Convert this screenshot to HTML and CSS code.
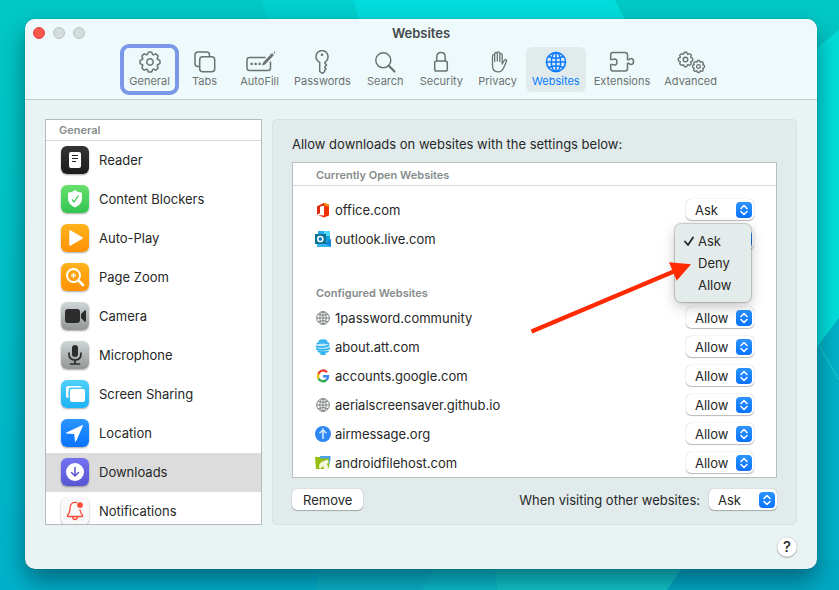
FILE: index.html
```html
<!DOCTYPE html>
<html lang="en">
<head>
<meta charset="utf-8">
<title>Websites</title>
<link rel="stylesheet" href="styles.css">
</head>
<body>
<svg class="defs" aria-hidden="true">
  <defs>
    <path id="tooth" d="M-3.06-7.39C-2.2-7.8-2.3-8.2-2.1-9Q-1.9-10-1-10H1Q1.900-10 2.100-9C2.300-8.200 2.200-7.800 3.060-7.390"/>
    <g id="gear">
      <use href="#tooth"/><use href="#tooth" transform="rotate(45)"/><use href="#tooth" transform="rotate(90)"/><use href="#tooth" transform="rotate(135)"/>
      <use href="#tooth" transform="rotate(180)"/><use href="#tooth" transform="rotate(225)"/><use href="#tooth" transform="rotate(270)"/><use href="#tooth" transform="rotate(315)"/>
      <circle r="3.2"/>
    </g>
    <g id="globe">
      <circle cx="12" cy="12" r="9.500"/><ellipse cx="12" cy="12" rx="4.700" ry="9.500"/>
      <path d="M12 2.500v19M2.500 12h19M4.500 6.500Q12 10 19.500 6.500M4.500 17.500Q12 14 19.500 17.500"/>
    </g>
    <symbol id="chevrons" viewBox="0 0 16 16">
      <rect width="16" height="16" rx="4" fill="url(#blue)"/>
      <path d="M5 6.500L8 3.500L11 6.500M5 9.500L8 12.500L11 9.500" fill="none" stroke="#fff" stroke-width="1.500" stroke-linecap="round" stroke-linejoin="round"/>
    </symbol>
    <linearGradient id="blue" x2="0" y2="1"><stop stop-color="#2b93ff"/><stop offset="1" stop-color="#0a72ff"/></linearGradient>
    <linearGradient id="sea" x2="0" y2="1"><stop stop-color="#00c9c5"/><stop offset=".5" stop-color="#00bfc6"/><stop offset="1" stop-color="#00b2cc"/></linearGradient>
  </defs>
</svg>
<svg class="wallpaper" viewBox="0 0 839 590" preserveAspectRatio="none" aria-hidden="true">
  <rect width="839" height="590" fill="url(#sea)"/>
  <path d="M262 0H353L365 40H273Z" fill="#00d0ce"/>
  <path d="M353 0H615L636 40H365Z" fill="#00dddc"/>
  <path d="M839 30L800 62V370L839 318Z" fill="#00dfda"/>
  <path d="M839 318L800 370V590H839Z" fill="#00b2c8"/>
  <path d="M819 345L839 380" stroke="#12c5d0" stroke-width="1.500"/>
  <path d="M321 560H439L422 590H316Z" fill="#0ab5c8"/>
  <path d="M439 560H494L497 590H422Z" fill="#0cbecb"/>
  <path d="M494 560H688L667 590H497Z" fill="#10c8cb"/>
  <path d="M688 560H839V590H667Z" fill="#00abc6"/>
</svg>

<main class="window">
  <header class="titlebar">
    <div class="lights"><button class="light close" aria-label="Close"></button><button class="light" aria-label="Minimize"></button><button class="light" aria-label="Zoom"></button></div>
    <h1>Websites</h1>
    <nav class="toolbar">
      <button class="tab focused"><svg viewBox="0 0 24 24"><use href="#gear" x="12" y="12"/></svg>General</button>
      <button class="tab"><svg viewBox="0 0 24 24"><path d="M6.500 16.500H5Q2 16.500 2 13.500V5Q2 2 5 2H13.500Q16.500 2 16.500 5V6.500"/><rect x="6.700" y="6.700" width="15" height="15" rx="3"/></svg>Tabs</button>
      <button class="tab"><svg class="wide" viewBox="0 0 30 24"><path d="M20 7.500H4.500Q2 7.500 2 10V18Q2 20.500 4.500 20.500H23Q25.500 20.500 25.500 18V12"/><path d="M18 14.500L20 13.500L28 5L27 4L19 12.500ZM29.500 2.700l.4-.4"/><path class="solid" d="M5.500 12.700h2.300v2.300H5.500zM9.500 12.700h2.300v2.300H9.500zM13.500 12.700h2.300v2.300H13.500z"/></svg>AutoFill</button>
      <button class="tab"><svg viewBox="0 0 24 24"><path d="M9.700 12.300Q6 10.500 6 6.500A6 6 0 0 1 18 6.500Q18 10.500 14.800 12.300V13L16.500 15L14.700 17L16 19L14.700 20.200V21.500L12.500 23.500L9.700 21.500Z"/><circle cx="12" cy="4.700" r="1.300" class="solid"/></svg>Passwords</button>
      <button class="tab"><svg viewBox="0 0 24 24"><circle cx="10.300" cy="10.300" r="7.500"/><path d="M15.800 15.800L21.500 21.500" stroke-width="2.200"/></svg>Search</button>
      <button class="tab"><svg viewBox="0 0 24 24"><rect x="5.700" y="11" width="12.600" height="10" rx="1.800"/><path d="M7.800 11V7Q7.800 2.500 12 2.500Q16.200 2.500 16.200 7V11"/></svg>Security</button>
      <button class="tab"><svg viewBox="0 0 24 24"><path d="M6.500 14V6Q6.500 4.700 7.600 4.700Q8.700 4.700 8.700 6V11.500V4Q8.700 2.500 10 2.500Q11.300 2.500 11.300 4V11V3.200Q11.300 1.800 12.500 1.800Q13.800 1.800 13.800 3.200V11.500V5Q13.800 3.700 15 3.700Q16.200 3.700 16.200 5V14L18.200 10.500Q19.200 9 20.200 9.700Q21 10.200 20.400 11.500L17.800 17.500Q16 21.800 12 21.800Q6.500 21.800 6.500 15.500Z" stroke-width="1.300"/></svg>Privacy</button>
      <button class="tab selected"><svg viewBox="0 0 24 24"><use href="#globe"/></svg>Websites</button>
      <button class="tab"><svg class="wide" viewBox="0 0 30 24"><path d="M6 2.500H18Q20.500 2.500 20.500 5V9.700H22Q22.500 8.500 24 8.500Q26.500 8.500 26.500 11.500Q26.500 14.500 24 14.500Q22.500 14.500 22 13.300H20.500V18.500Q20.500 21 18 21H6Q3.700 21 3.700 18.500V14.500H6Q6.500 15 7.500 15Q10 15 10 12Q10 9 7.500 9Q6.500 9 6 9.500H3.700V5Q3.700 2.500 6 2.500Z"/></svg>Extensions</button>
      <button class="tab"><svg class="wide" viewBox="0 0 30 24"><use href="#gear" transform="translate(9.500 9.500) scale(.72)" stroke-width="1.900"/><use href="#gear" transform="translate(22.500 16.500) scale(.6)" stroke-width="2.200"/></svg>Advanced</button>
    </nav>
  </header>

  <div class="content">
    <aside class="sidebar">
      <h2>General</h2>
      <ul>
        <li><button><svg class="app reader" viewBox="0 0 28 28"><rect x="8" y="6" width="12" height="16" rx="2" fill="#fff"/><path d="M11 9.500h6M11 12.500h6M11 15.500h4" stroke="#222" stroke-width="1.200"/></svg>Reader</button></li>
        <li><button><svg class="app green" viewBox="0 0 28 28"><path d="M14 5Q17 7.500 20.500 7.500Q21 7.500 21 9V14Q21 19 14 22.500Q7 19 7 14V9Q7 7.500 7.500 7.500Q11 7.500 14 5Z" fill="#fff"/><path d="M11 14.500L13 17L17.500 10.500" fill="none" stroke="#3cc953" stroke-width="1.300"/></svg>Content Blockers</button></li>
        <li><button><svg class="app orange" viewBox="0 0 28 28"><path d="M9 7L21 14L9 21Z" fill="#fff" stroke="#fff" stroke-width="1.500" stroke-linejoin="round"/></svg>Auto-Play</button></li>
        <li><button><svg class="app orange" viewBox="0 0 28 28" fill="none" stroke="#fff"><circle cx="12.500" cy="12.500" r="6.500" stroke-width="2"/><path d="M17.500 17.500L22 22" stroke-width="2.600" stroke-linecap="round"/><path d="M10 12.500h5M12.500 10v5" stroke-width="1.300"/></svg>Page Zoom</button></li>
        <li><button><svg class="app gray" viewBox="0 0 28 28" fill="#2c2c2c"><rect x="4" y="7" width="15" height="14" rx="3"/><path d="M20 12L23.500 8.500Q25 8 25 9V19Q25 20 23.500 19.500L20 16Z"/></svg>Camera</button></li>
        <li><button><svg class="app gray" viewBox="0 0 28 28"><rect x="11" y="4" width="6" height="12" rx="3" fill="#2c2c2c"/><path d="M8 12V13Q8 19 14 19Q20 19 20 13V12M14 19v4M9.500 23h9" fill="none" stroke="#2c2c2c" stroke-width="1.700" stroke-linecap="round"/></svg>Microphone</button></li>
        <li><button><svg class="app cyan" viewBox="0 0 28 28"><path d="M7 18Q5 18 5 16V8Q5 6 7 6H19Q20.500 6 21 7.500H10Q7.500 7.500 7.500 10V18Z" fill="#fff"/><rect x="9" y="9" width="15" height="13" rx="2" fill="#fff"/></svg>Screen Sharing</button></li>
        <li><button><svg class="app azure" viewBox="0 0 28 28"><path d="M5.500 14L21.500 6.500L14.500 22.500L13.700 14.500Z" fill="#fff" stroke="#fff" stroke-linejoin="round"/></svg>Location</button></li>
        <li class="current"><button><svg class="app violet" viewBox="0 0 28 28"><circle cx="14" cy="14" r="9" fill="#fff"/><path d="M14 9.500v8M10.500 14.500L14 18L17.500 14.500" fill="none" stroke="#5d5ad8" stroke-width="1.600" stroke-linecap="round" stroke-linejoin="round"/></svg>Downloads</button></li>
        <li><button><svg class="app white" viewBox="0 0 28 28" fill="none" stroke="#fa4a35" stroke-width="1.300" stroke-linecap="round" stroke-linejoin="round"><path d="M15.500 5.500Q9.500 4.500 9 11Q9 16 6.500 18V19.500H21.500V18Q19.500 16.500 19 13M11.500 20Q12 22.500 14 22.500Q16 22.500 16.500 20"/><circle cx="19" cy="8" r="2.200" fill="#fa4a35"/></svg>Notifications</button></li>
      </ul>
    </aside>

    <section class="panel">
      <p class="lead">Allow downloads on websites with the settings below:</p>
      <div class="sites">
        <h2 class="open-heading">Currently Open Websites</h2>
        <ul>
          <li>
            <svg class="favicon" viewBox="0 0 16 16"><path d="M2 4.500L9 1L14 2.500V13.500L9 15.500L3 13L9 13.500V3.500L5 4.500V11L2 12.500Z" fill="#f0320c"/><path d="M9 1L14 2.500V5L9 3.500Z" fill="#ff8a00"/><path d="M2 4.500L9 1V3.500L5 4.500V11L2 12.500Z" fill="#d9290d"/></svg>
            <label for="s1">office.com</label>
            <span class="popup"><select id="s1"><option>Ask</option><option>Deny</option><option>Allow</option></select><svg><use href="#chevrons"/></svg></span>
          </li>
          <li>
            <svg class="favicon" viewBox="0 0 16 16"><path d="M3 0H15V10H3Z" fill="#28a8ea"/><path d="M9 0H15V5H9Z" fill="#50d9ff"/><path d="M9 5H15V10H9Z" fill="#14a0dc"/><path d="M2 8L9 12L16 8V16H2Z" fill="#35b8f1"/><path d="M16 8L9 12L16 16Z" fill="#1486d8"/><rect y="3" width="11" height="10" fill="#0a7396"/><circle cx="5.300" cy="8" r="2.600" fill="#0a73c4" stroke="#fff" stroke-width="1.500"/></svg>
            <label for="s2">outlook.live.com</label>
            <span class="popup"><select id="s2"><option>Ask</option><option>Deny</option><option>Allow</option></select><svg><use href="#chevrons"/></svg>
              <span class="menu" role="menu">
                <button role="menuitemradio" aria-checked="true"><svg viewBox="0 0 10 10"><path d="M1 5.500L4 9L9 1.500"/></svg>Ask</button>
                <button role="menuitemradio" aria-checked="false">Deny</button>
                <button role="menuitemradio" aria-checked="false">Allow</button>
              </span>
              <svg class="arrow" viewBox="0 0 162 74" aria-hidden="true"><path d="M1.500 71.500L145 11" stroke="#ff2a00" stroke-width="4.200"/><path d="M161 4.300L139 2.300L146.700 20.700Z" fill="#ff2a00"/></svg>
            </span>
          </li>
        </ul>
        <h2 class="configured-heading">Configured Websites</h2>
        <ul>
          <li>
            <svg class="favicon globe" viewBox="0 0 24 24"><use href="#globe"/></svg>
            <label for="s3">1password.community</label>
            <span class="popup"><select id="s3"><option>Allow</option><option>Ask</option><option>Deny</option></select><svg><use href="#chevrons"/></svg></span>
          </li>
          <li>
            <svg class="favicon" viewBox="0 0 16 16" fill="none" stroke="#2fb1ee" stroke-width="1.800" stroke-linecap="round"><circle cx="8" cy="8" r="7" fill="#c4e9fb" stroke="none"/><path d="M4.500 2Q8 .5 11.500 2M2.500 4.500Q8 2.500 13.500 4.500M1.500 7.500Q7 9 13.500 6.500M1.800 10Q8 12 14.300 9.500M3.500 12.500Q8 14 12.800 12.500M6 14.800Q8 15.300 10 14.800"/></svg>
            <label for="s4">about.att.com</label>
            <span class="popup"><select id="s4"><option>Allow</option><option>Ask</option><option>Deny</option></select><svg><use href="#chevrons"/></svg></span>
          </li>
          <li>
            <svg class="favicon" viewBox="0 0 16 16" fill="none" stroke-width="2.400"><path d="M12 4.300A5 5 0 0 0 3.500 6" stroke="#ea4335"/><path d="M3.500 6A5 5 0 0 0 3.500 10.500" stroke="#fbbc05"/><path d="M3.500 10.500A5 5 0 0 0 11.300 12" stroke="#34a853"/><path d="M8 8.200H13Q13 10.800 11.300 12" stroke="#4285f4"/></svg>
            <label for="s5">accounts.google.com</label>
            <span class="popup"><select id="s5"><option>Allow</option><option>Ask</option><option>Deny</option></select><svg><use href="#chevrons"/></svg></span>
          </li>
          <li>
            <svg class="favicon globe" viewBox="0 0 24 24"><use href="#globe"/></svg>
            <label for="s6">aerialscreensaver.github.io</label>
            <span class="popup"><select id="s6"><option>Allow</option><option>Ask</option><option>Deny</option></select><svg><use href="#chevrons"/></svg></span>
          </li>
          <li>
            <svg class="favicon" viewBox="0 0 16 16"><circle cx="8" cy="8" r="8" fill="#2f87f3"/><path d="M8 13V4M4.500 7Q7 6 8 3.500Q9 6 11.500 7" fill="none" stroke="#cfe8ff" stroke-width="1.600"/></svg>
            <label for="s7">airmessage.org</label>
            <span class="popup"><select id="s7"><option>Allow</option><option>Ask</option><option>Deny</option></select><svg><use href="#chevrons"/></svg></span>
          </li>
          <li>
            <svg class="favicon" viewBox="0 0 16 16"><path d="M5 1H15.500V4L14 12H5Z" fill="#4aa3e8"/><path d="M0 2H5L6 3.500H14V14H1Z" fill="#97bf0d"/><path d="M4 12Q4 7 9 6L12 4.500L14 7L12 9L14 14H9L8 11L5 14Z" fill="#f3f7dc"/></svg>
            <label for="s8">androidfilehost.com</label>
            <span class="popup"><select id="s8"><option>Allow</option><option>Ask</option><option>Deny</option></select><svg><use href="#chevrons"/></svg></span>
          </li>
        </ul>
      </div>
      <div class="actions">
        <button class="push">Remove</button>
        <label for="other">When visiting other websites:</label>
        <span class="popup"><select id="other"><option>Ask</option><option>Deny</option><option>Allow</option></select><svg><use href="#chevrons"/></svg></span>
      </div>
    </section>
  </div>
  <footer><button class="help" aria-label="Help">?</button></footer>
</main>
</body>
</html>
```
FILE: styles.css
```css
* { box-sizing: border-box; }

body {
  margin: 0;
  min-height: 100vh;
  padding: 19px 22px 21px 25px;
  background: #00bcc8;
  color: #262828;
  font: 13px/16px Inter, "Liberation Sans", sans-serif;
}

h1, h2, p, ul { margin: 0; padding: 0; }
ul { list-style: none; }
button, select { font: inherit; color: inherit; border: 0; padding: 0; background: none; }
svg { display: block; flex: none; }

.defs { position: absolute; width: 0; height: 0; }
.wallpaper { position: absolute; inset: 0; width: 100%; height: 100%; }

.window {
  position: relative;
  border-radius: 10px;
  background: #e9f3f4;
  box-shadow: 0 0 1px rgba(0, 40, 50, .6), 0 12px 24px rgba(0, 40, 60, .52);
}

.titlebar {
  position: relative;
  padding: 5px 8px 7px;
  border-bottom: 1px solid #b9cfcd;
  border-radius: 10px 10px 0 0;
  background: #eef9fb;
}
.lights { position: absolute; top: 8px; left: 8px; display: flex; gap: 8px; }
.light { width: 12px; height: 12px; border: 1px solid #bcc4c4; border-radius: 50%; background: #d3dbdb; }
.light.close { background: #fc564c; border-color: #e2443c; }
h1 { font-size: 13px; line-height: 18px; font-weight: 600; text-align: center; color: #444948; }

.toolbar { display: flex; justify-content: center; gap: 2px; margin-top: 5px; padding-left: 4px; }
.tab {
  display: flex;
  flex-direction: column;
  align-items: center;
  min-width: 53px;
  padding: 3px 6px 4px;
  border-radius: 6px;
  font-size: 11px;
  line-height: 14px;
  color: #6c7272;
}
.tab svg { width: 24px; height: 24px; fill: none; stroke: currentColor; stroke-width: 1.5; stroke-linejoin: round; stroke-linecap: round; }
.tab svg.wide { width: 30px; }
.tab .solid { fill: currentColor; stroke: none; }
.tab.focused { outline: 4px solid #7b98e8; outline-offset: -1px; }
.tab.selected { background: #e1ebec; color: #0a7aff; }

.content { display: grid; grid-template-columns: 217px 1fr; gap: 10px; padding: 19px 20px 0; }

.sidebar { contain: size; overflow: hidden; border: 1px solid #b1bcbc; background: #fff; }
.sidebar h2 { padding: 2px 13px 1px; border-bottom: 1px solid #d5d9d9; }
h2 { font-size: 11px; line-height: 17px; font-weight: 600; color: #858b8b; }
.sidebar li button { display: flex; align-items: center; gap: 10px; width: 100%; height: 39px; padding: 0 15px 1px; text-align: left; }
.sidebar .current { background: #dcdcdc; }

.app { width: 28px; height: 28px; border-radius: 6px; box-shadow: 0 1px 2px rgba(0, 0, 0, .35); }
.reader { background: linear-gradient(#333, #1c1c1c); }
.green { background: linear-gradient(#68e06c, #34c451); }
.orange { background: linear-gradient(#ffb21c, #ff9204); }
.gray { background: linear-gradient(#cfd6d8, #939595); }
.cyan { background: linear-gradient(#4fd0f8, #1fb2f6); }
.azure { background: linear-gradient(#2a96ff, #0873ff); }
.violet { background: linear-gradient(#7472f3, #5856d2); }
.white { background: #f9f9f9; }

.panel { padding: 16px 19px 14px; border: 1px solid #d8e1e2; border-radius: 5px; background: #e2ebec; }
.sites { margin-top: 10px; border: 1px solid #b9bfbf; background: #fff; }
.open-heading { padding: 4px 23px 1px; border-bottom: 1px solid #d5d9d9; margin-bottom: 9px; }
.configured-heading { margin-top: 30px; padding: 2px 23px 1px; }
.sites li { display: flex; align-items: center; gap: 4px; height: 29px; padding: 0 22px; }
.favicon { width: 16px; height: 16px; }
.favicon.globe { fill: none; stroke: #7b8080; stroke-width: 1.5; }
.sites li label { flex: 1; }

.popup { position: relative; display: block; width: 68px; height: 21px; flex: none; }
.popup select {
  width: 100%;
  height: 21px;
  padding: 0 20px 0 9px;
  appearance: none;
  border-radius: 5px;
  background: #fff;
  box-shadow: 0 0 1px rgba(0, 0, 0, .35), 0 1px 1px rgba(0, 0, 0, .25);
}
.popup > svg { position: absolute; top: 3px; right: 2px; width: 16px; height: 16px; pointer-events: none; }

.menu {
  position: absolute;
  z-index: 2;
  top: -4px;
  left: -11px;
  width: 76px;
  padding: 6px 0;
  border-radius: 6px;
  background: #e3ebeb;
  box-shadow: 0 0 1px 1px rgba(0, 0, 0, .2), 0 5px 14px rgba(0, 0, 0, .22);
}
.menu button { display: flex; align-items: center; width: 100%; height: 22px; padding-left: 23px; }
.menu button svg { width: 10px; height: 10px; margin: 0 4px 0 -14px; fill: none; stroke: currentColor; stroke-width: 1.8; stroke-linecap: round; stroke-linejoin: round; }
.popup > .arrow { z-index: 3; top: 32px; left: -156px; right: auto; width: 162px; height: 74px; }

.actions { display: flex; align-items: center; gap: 9px; margin-top: 11px; }
.push { margin-right: auto; height: 21px; padding: 0 11px; border-radius: 5px; background: #fff; box-shadow: 0 0 1px rgba(0, 0, 0, .35), 0 1px 1px rgba(0, 0, 0, .25); }

footer { display: flex; justify-content: flex-end; padding: 12px 20px 12px; }
.help { width: 20px; height: 20px; border-radius: 50%; background: #fff; font-size: 15px; font-weight: 500; box-shadow: 0 0 1px rgba(0, 0, 0, .4), 0 1px 1px rgba(0, 0, 0, .25); }
```
